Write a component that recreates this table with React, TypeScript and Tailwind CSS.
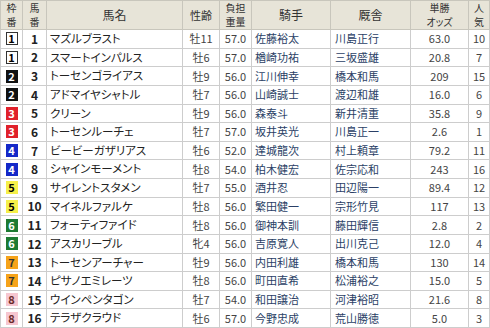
import { clsx } from 'clsx'

type Horse = {
  gate: number
  num: number
  name: string
  sexAge: string
  weight: string
  jockey: string
  trainer: string
  odds: string
  pop: number
}

const horses: Horse[] = [
  { gate: 1, num: 1, name: 'マズルブラスト', sexAge: '牡11', weight: '57.0', jockey: '佐藤裕太', trainer: '川島正行', odds: '63.0', pop: 10 },
  { gate: 1, num: 2, name: 'スマートインパルス', sexAge: '牡6', weight: '57.0', jockey: '楢崎功祐', trainer: '三坂盛雄', odds: '20.8', pop: 7 },
  { gate: 2, num: 3, name: 'トーセンゴライアス', sexAge: '牡9', weight: '56.0', jockey: '江川伸幸', trainer: '橋本和馬', odds: '209', pop: 15 },
  { gate: 2, num: 4, name: 'アドマイヤシャトル', sexAge: '牡7', weight: '56.0', jockey: '山崎誠士', trainer: '渡辺和雄', odds: '16.0', pop: 6 },
  { gate: 3, num: 5, name: 'クリーン', sexAge: '牡9', weight: '56.0', jockey: '森泰斗', trainer: '新井清重', odds: '35.8', pop: 9 },
  { gate: 3, num: 6, name: 'トーセンルーチェ', sexAge: '牡7', weight: '57.0', jockey: '坂井英光', trainer: '川島正一', odds: '2.6', pop: 1 },
  { gate: 4, num: 7, name: 'ビービーガザリアス', sexAge: '牡6', weight: '52.0', jockey: '達城龍次', trainer: '村上頼章', odds: '79.2', pop: 11 },
  { gate: 4, num: 8, name: 'シャインモーメント', sexAge: '牡8', weight: '54.0', jockey: '柏木健宏', trainer: '佐宗応和', odds: '243', pop: 16 },
  { gate: 5, num: 9, name: 'サイレントスタメン', sexAge: '牡7', weight: '55.0', jockey: '酒井忍', trainer: '田辺陽一', odds: '89.4', pop: 12 },
  { gate: 5, num: 10, name: 'マイネルファルケ', sexAge: '牡8', weight: '56.0', jockey: '繁田健一', trainer: '宗形竹見', odds: '117', pop: 13 },
  { gate: 6, num: 11, name: 'フォーティファイド', sexAge: '牡8', weight: '56.0', jockey: '御神本訓', trainer: '藤田輝信', odds: '2.8', pop: 2 },
  { gate: 6, num: 12, name: 'アスカリーブル', sexAge: '牝4', weight: '56.0', jockey: '吉原寛人', trainer: '出川克己', odds: '12.0', pop: 4 },
  { gate: 7, num: 13, name: 'トーセンアーチャー', sexAge: '牡9', weight: '56.0', jockey: '内田利雄', trainer: '橋本和馬', odds: '130', pop: 14 },
  { gate: 7, num: 14, name: 'ピサノエミレーツ', sexAge: '牡8', weight: '56.0', jockey: '町田直希', trainer: '松浦裕之', odds: '15.0', pop: 5 },
  { gate: 8, num: 15, name: 'ウインペンタゴン', sexAge: '牡7', weight: '54.0', jockey: '和田譲治', trainer: '河津裕昭', odds: '21.6', pop: 8 },
  { gate: 8, num: 16, name: 'テラザクラウド', sexAge: '牡6', weight: '57.0', jockey: '今野忠成', trainer: '荒山勝徳', odds: '5.0', pop: 3 },
]

// 枠の色 (JRA の帽色)
const gateStyles: Record<number, string> = {
  1: 'bg-white text-black border-[#333]',
  2: 'bg-[#111] text-white border-[#111]',
  3: 'bg-[#e0202a] text-white border-[#e0202a]',
  4: 'bg-[#1428c8] text-white border-[#1428c8]',
  5: 'bg-[#f6f04a] text-black border-[#f6f04a]',
  6: 'bg-[#1d7a32] text-white border-[#1d7a32]',
  7: 'bg-[#f6a31a] text-[#333] border-[#f6a31a]',
  8: 'bg-[#f6c6d0] text-[#6a2a2a] border-[#f6c6d0]',
}

const cell = 'border border-[#cdcdcd] p-0'
const head = 'border border-[#c8c6bc] p-0 font-normal text-[10px] text-[#333] leading-[14px]'

function GateBox({ gate }: { gate: number }) {
  return (
    <span
      className={clsx(
        'inline-flex h-[13px] w-[12px] items-center justify-center border text-[11px] font-bold leading-none',
        gateStyles[gate],
      )}
    >
      {gate}
    </span>
  )
}

export default function App() {
  return (
    <div className="h-[328px] w-[490px] overflow-hidden bg-white">
      <table
        className="h-[328px] w-[490px] table-fixed border-collapse text-[11px] text-[#333] [font-feature-settings:'palt']"
        style={{ fontFamily: '"Noto Sans CJK JP", "Liberation Sans", sans-serif' }}
      >
        <colgroup>
          <col className="w-[22px]" />
          <col className="w-[24px]" />
          <col className="w-[136px]" />
          <col className="w-[37px]" />
          <col className="w-[32px]" />
          <col className="w-[79px]" />
          <col className="w-[80px]" />
          <col className="w-[58px]" />
          <col />
        </colgroup>
        <thead>
          <tr className="h-[29px] bg-[#e7e4d8] text-center">
            <th className={head}>枠<br />番</th>
            <th className={head}>馬<br />番</th>
            <th className={clsx(head, 'text-[12px]')}>馬名</th>
            <th className={clsx(head, 'text-[11px]')}>性齢</th>
            <th className={head}>負担<br />重量</th>
            <th className={clsx(head, 'text-[12px]')}>騎手</th>
            <th className={clsx(head, 'text-[12px]')}>厩舎</th>
            <th className={head}>単勝<br />オッズ</th>
            <th className={head}>人<br />気</th>
          </tr>
        </thead>
        <tbody>
          {horses.map((h) => (
            <tr key={h.num} className="leading-none">
              <td className={clsx(cell, 'text-center')}>
                <GateBox gate={h.gate} />
              </td>
              <td className={clsx(cell, 'text-center text-[12px] font-semibold text-[#222]')}>{h.num}</td>
              <td className={clsx(cell, 'pl-[3px] text-[11.5px] text-[#222]')}>{h.name}</td>
              <td className={clsx(cell, 'text-center text-[#444]')}>{h.sexAge}</td>
              <td className={clsx(cell, 'text-center text-[11px] text-[#444]')}>{h.weight}</td>
              <td className={clsx(cell, 'pl-[3px] text-[#2b3f66]')}>{h.jockey}</td>
              <td className={clsx(cell, 'pl-[4px] text-[#2b3f66]')}>{h.trainer}</td>
              <td className={clsx(cell, 'text-center text-[11px] text-[#444]')}>{h.odds}</td>
              <td className={clsx(cell, 'text-center text-[11px] text-[#444]')}>{h.pop}</td>
            </tr>
          ))}
        </tbody>
      </table>
    </div>
  )
}
